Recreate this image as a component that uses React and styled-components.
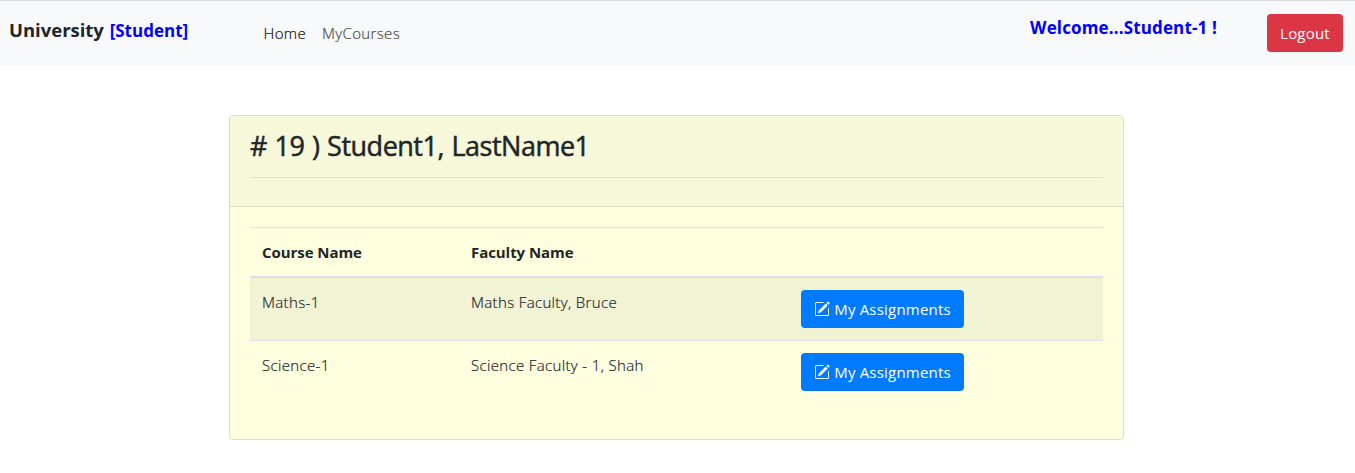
import React from "react";
import styled, { createGlobalStyle } from "styled-components";
import { BsPencilSquare } from "react-icons/bs";

const GlobalStyle = createGlobalStyle`
  *, *::before, *::after { box-sizing: border-box; }
  body {
    margin: 0;
    background: #fff;
    color: #212529;
    font: 400 15px/24px "Open Sans", "Noto Sans", sans-serif;
  }
`;

const Navbar = styled.nav`
  display: flex;
  align-items: flex-start;
  height: 65px;
  padding: 13px 12px 0 9px;
  border-top: 1px solid #dadbdd;
  background: #f8f9fa;
  white-space: nowrap;
`;

const Brand = styled.div`
  width: 254.5px;
  padding-top: 1px;
  font-size: 18.5px;
  line-height: 30px;
  font-weight: 700;
  letter-spacing: -0.02px;
`;

const Role = styled.span`
  margin-left: 1px;
  font-size: 17px;
  letter-spacing: 0;
  color: #0000ff;
`;

const NavLinks = styled.div`
  display: flex;
  flex: 1;
  gap: 16px;
  padding-top: 7px;
`;

const NavLink = styled.a`
  font-weight: 300;
  letter-spacing: 0.35px;
  -webkit-text-stroke: 0.2px;
  color: ${(p) => (p.$active ? "#111" : "#4a4b4c")};
`;

const Welcome = styled.div`
  margin-right: 50px;
  font-size: 17px;
  line-height: 27px;
  font-weight: 700;
  letter-spacing: 0.14px;
  color: #0000ff;
`;

const Button = styled.button`
  display: inline-flex;
  align-items: center;
  justify-content: center;
  gap: 4px;
  width: ${(p) => p.$width}px;
  height: 38px;
  padding: 0;
  border: 0;
  border-radius: 4px;
  background: ${(p) => (p.$danger ? "#dc3545" : "#007bff")};
  color: #fff;
  font: inherit;
  font-weight: 400;
  letter-spacing: 0.2px;
  white-space: nowrap;
`;

const Card = styled.section`
  width: 895px;
  height: 325px;
  margin: 50px 0 0 229px;
  border: 1px solid #dfdfc4;
  border-radius: 4px;
  background: #ffffe0;
  overflow: hidden;
`;

const CardHeader = styled.header`
  height: 91px;
  padding: 12px 20px;
  border-bottom: 1px solid #d9d9be;
  background: #f7f7d9;
`;

const Title = styled.h3`
  margin: 0;
  height: 50px;
  border-bottom: 1px solid #dedec3;
  font-size: 27px;
  line-height: 36px;
  font-weight: 400;
  letter-spacing: -0.5px;
  word-spacing: 1.1px;
  -webkit-text-stroke: 0.5px;
`;

const CardBody = styled.div`
  padding: 20px;
`;

const Row = styled.div`
  display: grid;
  grid-template-columns: 209px 330px 1fr;
  height: ${(p) => (p.$head ? 51 : 63)}px;
  padding: 0 12px;
  border-top: 1px solid #dee2e6;
  background: ${(p) => (p.$striped ? "#f2f2d5" : "transparent")};
  ${(p) => p.$head && "border-bottom: 2px solid #dee2e6;"}
  ${(p) => p.$striped && "border-top: 0; height: 62px;"}
`;

const Cell = styled.div`
  padding-top: 12px;
  font-weight: ${(p) => (p.$head ? 700 : 300)};
  letter-spacing: ${(p) => (p.$head ? -0.06 : 0.35)}px;
  -webkit-text-stroke: ${(p) => (p.$head || p.$action ? 0 : 0.2)}px;
`;

const courses = [
  { name: "Maths-1", faculty: "Maths Faculty, Bruce" },
  { name: "Science-1", faculty: "Science Faculty - 1, Shah" },
];

export default function App() {
  return (
    <>
      <GlobalStyle />
      <Navbar>
        <Brand>
          University <Role>[Student]</Role>
        </Brand>
        <NavLinks>
          <NavLink $active>Home</NavLink>
          <NavLink>MyCourses</NavLink>
        </NavLinks>
        <Welcome>Welcome...Student-1 !</Welcome>
        <Button $danger $width={76}>Logout</Button>
      </Navbar>
      <Card>
        <CardHeader>
          <Title># 19 ) Student1, LastName1</Title>
        </CardHeader>
        <CardBody>
          <Row $head>
            <Cell $head>Course Name</Cell>
            <Cell $head>Faculty Name</Cell>
          </Row>
          {courses.map((course, i) => (
            <Row key={course.name} $striped={i % 2 === 0}>
              <Cell>{course.name}</Cell>
              <Cell>{course.faculty}</Cell>
              <Cell $action>
                <Button $width={163}>
                  <BsPencilSquare size={16} />
                  My Assignments
                </Button>
              </Cell>
            </Row>
          ))}
        </CardBody>
      </Card>
    </>
  );
}
